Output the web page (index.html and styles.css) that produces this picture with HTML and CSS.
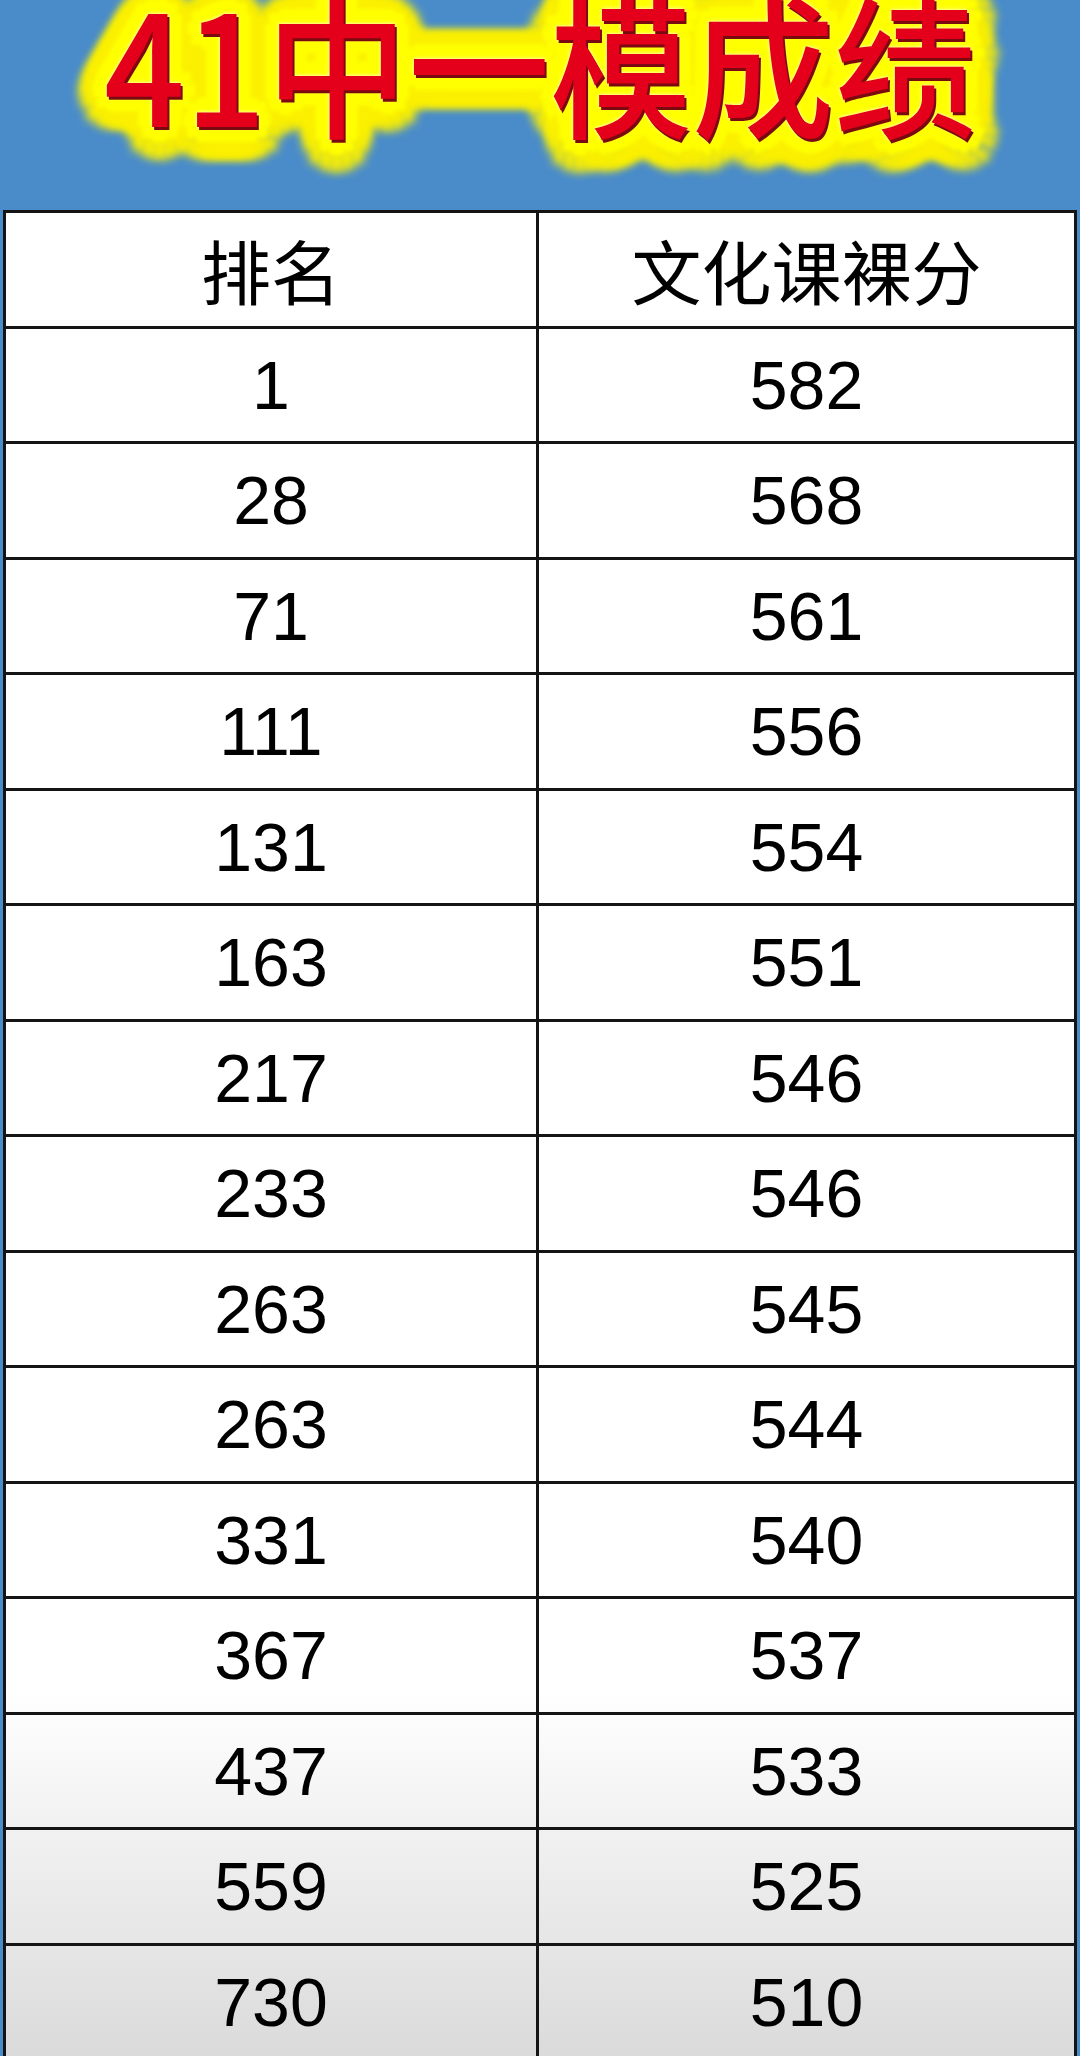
FILE: index.html
```html
<!DOCTYPE html>
<html lang="zh-CN">
<head>
<meta charset="utf-8">
<title>41中一模成绩</title>
<link rel="stylesheet" href="styles.css">
</head>
<body>
<div class="page">
  <header class="banner">
    <h1 class="title">41中一模成绩</h1>
  </header>
  <div class="table">
    <div class="cell head">排名</div><div class="cell head">文化课裸分</div>
    <div class="cell">1</div><div class="cell">582</div>
    <div class="cell">28</div><div class="cell">568</div>
    <div class="cell">71</div><div class="cell">561</div>
    <div class="cell">111</div><div class="cell">556</div>
    <div class="cell">131</div><div class="cell">554</div>
    <div class="cell">163</div><div class="cell">551</div>
    <div class="cell">217</div><div class="cell">546</div>
    <div class="cell">233</div><div class="cell">546</div>
    <div class="cell">263</div><div class="cell">545</div>
    <div class="cell">263</div><div class="cell">544</div>
    <div class="cell">331</div><div class="cell">540</div>
    <div class="cell">367</div><div class="cell">537</div>
    <div class="cell">437</div><div class="cell">533</div>
    <div class="cell">559</div><div class="cell">525</div>
    <div class="cell">730</div><div class="cell">510</div>
  </div>
</div>
</body>
</html>
```
FILE: styles.css
```css
html, body {
  margin: 0;
  padding: 0;
  height: 2056px;
  overflow: hidden;
  background: #4a8cca;
}

.page {
  width: 1080px;
  height: 2056px;
  overflow: hidden;
  background: #4a8cca;
}

.banner {
  height: 210px;
  display: flex;
  justify-content: center;
  align-items: flex-start;
  overflow: hidden;
}

.title {
  margin: -30px 0 0 0;
  font-family: "Noto Sans CJK SC", "Noto Sans", sans-serif;
  font-weight: 500;
  font-size: 142px;
  line-height: 180px;
  color: #e4001b;
  white-space: nowrap;
  transform: scaleY(1.08);
  text-shadow:
    2px 3px 0 #7a0a10,
    0 0 3px #fffbe0,
    0 0 6px #ffff40,
    14px 0 4px #ffff00,
    -14px 0 4px #ffff00,
    0 14px 4px #ffff00,
    0 -14px 4px #ffff00,
    10px 10px 4px #ffff00,
    -10px 10px 4px #ffff00,
    10px -10px 4px #ffff00,
    -10px -10px 4px #ffff00,
    28px 0 9px #fbf000,
    -28px 0 9px #fbf000,
    0 30px 9px #fbf000,
    0 -26px 9px #fbf000,
    20px 22px 9px #fbf000,
    -20px 22px 9px #fbf000,
    18px -18px 9px #fbf000,
    -18px -18px 9px #fbf000,
    26px 10px 9px #fbf000,
    -26px 10px 9px #fbf000,
    24px -10px 9px #fbf000,
    -24px -10px 9px #fbf000,
    10px 28px 9px #fbf000,
    -10px 28px 9px #fbf000,
    10px -24px 9px #fbf000,
    -10px -24px 9px #fbf000;
}

.table {
  margin-left: 3px;
  width: 1068px;
  border: 3px solid #141414;
  display: grid;
  grid-template-columns: 533px 1fr;
  background: linear-gradient(to bottom, #ffffff 0%, #ffffff 80%, #f0f0f0 88%, #dadada 100%);
}

.cell {
  height: 112.5px;
  border-bottom: 3px solid #141414;
  display: flex;
  align-items: center;
  justify-content: center;
  font-family: "Liberation Sans", Arial, sans-serif;
  font-size: 68px;
  color: #000;
}

.cell:nth-child(odd) {
  border-right: 3px solid #141414;
}

.head {
  font-family: "Noto Sans CJK SC", "Noto Sans", sans-serif;
  font-size: 70px;
  font-weight: 400;
}
```
